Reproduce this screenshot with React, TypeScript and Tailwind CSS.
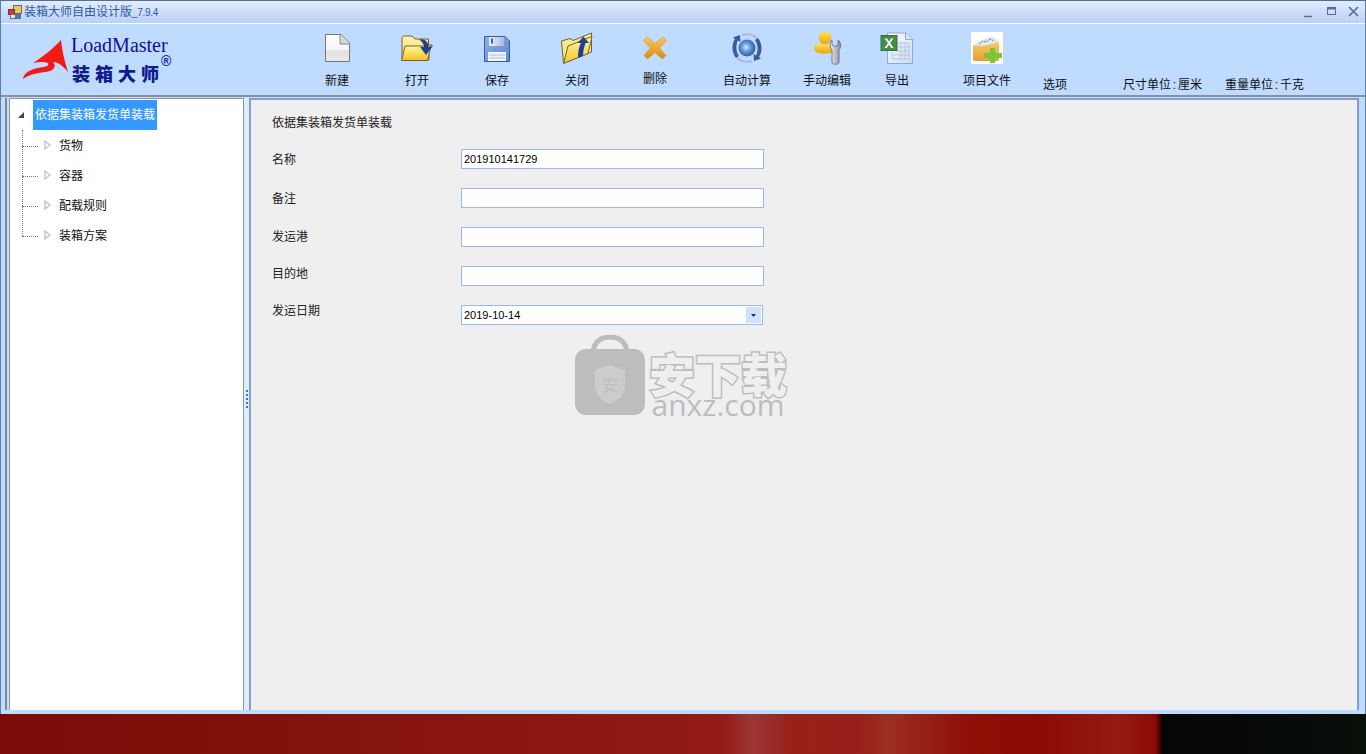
import React from "react";

const cjk = "font-['Liberation_Sans','Noto_Sans_CJK_SC',sans-serif]";

function NewIcon() {
  return (
    <svg width="32" height="32" viewBox="0 0 32 32">
      <defs>
        <linearGradient id="newFill" x1="0" y1="0" x2="0" y2="1">
          <stop offset="0" stopColor="#ffffff" />
          <stop offset="0.55" stopColor="#f6f6f6" />
          <stop offset="0.6" stopColor="#e2e2e2" />
          <stop offset="1" stopColor="#e8e8e8" />
        </linearGradient>
      </defs>
      <path d="M4.5 2.5H20L28.5 11V29.5H4.5Z" fill="url(#newFill)" stroke="#77777a" strokeWidth="1" />
      <path d="M19 3V12H28" fill="#d8d8d8" stroke="#8a8a8a" strokeWidth="1" />
    </svg>
  );
}

function OpenIcon() {
  return (
    <svg width="34" height="32" viewBox="0 0 34 32">
      <defs>
        <linearGradient id="openBack" x1="0" y1="0" x2="0" y2="1">
          <stop offset="0" stopColor="#fff4a8" />
          <stop offset="1" stopColor="#f7d860" />
        </linearGradient>
        <linearGradient id="openFront" x1="0" y1="0" x2="0" y2="1">
          <stop offset="0" stopColor="#fff6a6" />
          <stop offset="1" stopColor="#f8c21c" />
        </linearGradient>
      </defs>
      <path d="M2 6.5C2 5 3 4 4.5 4H12L15 7H28.5V13H32V15H29V28H2Z" fill="url(#openBack)" stroke="#6e6038" strokeWidth="1" />
      <path d="M1.5 28.5L5 14H31L27.5 28.5Z" fill="url(#openFront)" stroke="#6e6038" strokeWidth="1" />
      <path d="M19 7.5C25 6.5 28.5 10 28.5 15H32L26 23L20 15H24C24 12 22 9.5 19 7.5Z" fill="#1f3f8f" />
    </svg>
  );
}

function SaveIcon() {
  return (
    <svg width="28" height="32" viewBox="0 0 28 32">
      <defs>
        <linearGradient id="saveFill" x1="0" y1="0" x2="1" y2="1">
          <stop offset="0" stopColor="#8fb2ea" />
          <stop offset="1" stopColor="#5d86d0" />
        </linearGradient>
        <linearGradient id="saveTop" x1="0" y1="0" x2="1" y2="0">
          <stop offset="0" stopColor="#f0f4fb" />
          <stop offset="1" stopColor="#a9b9d8" />
        </linearGradient>
      </defs>
      <path d="M1.5 4.5H22L26.5 9V29.5H1.5Z" fill="url(#saveFill)" stroke="#2f5cad" strokeWidth="1" />
      <rect x="6" y="5" width="15" height="9" fill="url(#saveTop)" />
      <rect x="8" y="6.5" width="2" height="5" fill="#3a64ae" />
      <rect x="5" y="20" width="18" height="9" fill="#f2f5fb" />
      <path d="M6 23H22M6 26H22" stroke="#a8bde0" strokeWidth="1" />
    </svg>
  );
}

function CloseFolderIcon() {
  return (
    <svg width="34" height="32" viewBox="0 0 34 32">
      <defs>
        <linearGradient id="closeFront" x1="0" y1="0" x2="0" y2="1">
          <stop offset="0" stopColor="#fff6a6" />
          <stop offset="1" stopColor="#f6c72a" />
        </linearGradient>
      </defs>
      <path d="M1.5 9L10 6.5L13 8.5L31.5 1V20L3.5 31Z" fill="#fbe98c" stroke="#6e6038" strokeWidth="1" />
      <path d="M3.5 31.5L8 14L32 4.5L28 21.5Z" fill="url(#closeFront)" stroke="#6e6038" strokeWidth="1" />
      <path d="M18 26C18 19 19 14 21 11H17.5L23.5 4.5L29 11H25.5C24 15 23 20 23 24Z" fill="#1f3f96" />
    </svg>
  );
}

function DeleteIcon() {
  return (
    <svg width="26" height="26" viewBox="0 0 26 26">
      <defs>
        <linearGradient id="delA" x1="0" y1="0" x2="0" y2="1">
          <stop offset="0" stopColor="#fbc65a" />
          <stop offset="1" stopColor="#e08a06" />
        </linearGradient>
      </defs>
      <path
        d="M5 2L13 8.5L21 2L24.5 5.5L17.5 13L24 20.5L20.5 24L13 17.5L5.5 24L2 20.5L8.5 13L1.5 5.5Z"
        fill="url(#delA)"
        stroke="#c98a2a"
        strokeWidth="0.5"
      />
    </svg>
  );
}

function AutoIcon() {
  return (
    <svg width="34" height="32" viewBox="0 0 34 32">
      <defs>
        <radialGradient id="autoGlobe" cx="0.45" cy="0.45" r="0.6">
          <stop offset="0" stopColor="#d2e6fa" />
          <stop offset="0.5" stopColor="#5a90d4" />
          <stop offset="1" stopColor="#2c5098" />
        </radialGradient>
      </defs>
      <circle cx="17" cy="16" r="8.5" fill="url(#autoGlobe)" />
      <path d="M6 26C2 21 1 13 5 7L3 5.5L10 3L10.5 10L8 8.5C5.5 13 6 20 9 24Z" fill="#3c5a9c" />
      <path d="M28 6C32 11 33 19 29 25L31 26.5L24 29L23.5 22L26 23.5C28.5 19 28 12 25 8Z" fill="#3c5a9c" />
      <path d="M12 3C18 1 24 3 27 6" stroke="#a9bade" strokeWidth="2" fill="none" />
      <path d="M22 29C16 31 10 29 7 26" stroke="#a9bade" strokeWidth="2" fill="none" />
    </svg>
  );
}

function ManualIcon() {
  return (
    <svg width="30" height="34" viewBox="0 0 30 34">
      <defs>
        <linearGradient id="manGold" x1="0" y1="0" x2="0" y2="1">
          <stop offset="0" stopColor="#ffe35a" />
          <stop offset="1" stopColor="#e8a40c" />
        </linearGradient>
        <linearGradient id="manTool" x1="0" y1="0" x2="1" y2="0">
          <stop offset="0" stopColor="#f2f2f6" />
          <stop offset="1" stopColor="#8888a0" />
        </linearGradient>
      </defs>
      <circle cx="13" cy="7" r="6.5" fill="url(#manGold)" />
      <path d="M2 17C2 13 6 12 9 13C13 14 18 14 21 15V21C18 23 8 23 4 21C3 20 2 19 2 17Z" fill="url(#manGold)" />
      <path
        d="M20 9V14L23 15.5L26 14V9C29 11 29.5 16 27 19V31C27 34 20 34 20 31V19C17.5 16 17.5 11 20 9Z"
        fill="url(#manTool)"
        stroke="#606078"
        strokeWidth="0.8"
      />
    </svg>
  );
}

function ExcelIcon() {
  return (
    <svg width="34" height="32" viewBox="0 0 34 32">
      <defs>
        <linearGradient id="xlsPage" x1="0" y1="0" x2="1" y2="1">
          <stop offset="0" stopColor="#ffffff" />
          <stop offset="1" stopColor="#c9daf0" />
        </linearGradient>
      </defs>
      <path d="M7.5 1H26L32.5 7V31.5H7.5Z" fill="url(#xlsPage)" stroke="#8fa8cc" strokeWidth="1" />
      <path d="M25.5 1V7.5H32.5" fill="#dfe8f5" stroke="#8fa8cc" strokeWidth="1" />
      <path
        d="M17 11H29V27H12V20M21 11V27M25 11V27M12 23H29M17 15H29M17 19H29"
        fill="none"
        stroke="#b7c8de"
        strokeWidth="1"
      />
      <rect x="1" y="3.5" width="16" height="15" fill="#3f8f45" stroke="#3d6b52" strokeWidth="1" />
      <path d="M4.5 6.5L8 11L4.5 16H6.8L9 12.7L11.2 16H13.6L10.1 11L13.4 6.5H11.1L9 9.4L7 6.5Z" fill="#ffffff" />
    </svg>
  );
}

function ProjectIcon() {
  return (
    <svg width="32" height="32" viewBox="0 0 32 32">
      <defs>
        <linearGradient id="prjFolder" x1="0" y1="0" x2="0" y2="1">
          <stop offset="0" stopColor="#f8cb6a" />
          <stop offset="1" stopColor="#e49f2c" />
        </linearGradient>
      </defs>
      <rect width="32" height="32" fill="#ffffff" />
      <path d="M4 11L20 4L28 9V18H4Z" fill="#e4e8ee" />
      <path d="M8 12L12 9L15 10L19 7L23 9" stroke="#4f7fb4" strokeWidth="1" fill="none" strokeDasharray="2 1" />
      <path d="M2 13L12 14L28 10V27C28 28 27 29 26 29H4C3 29 2 28 2 27Z" fill="url(#prjFolder)" />
      <path d="M19 16H24V21H31V26H24V31H19V26H13V21H19Z" fill="#7ac63a" />
    </svg>
  );
}

function AppIcon() {
  return (
    <svg width="14" height="14" viewBox="0 0 14 14">
      <rect x="5.5" y="0.5" width="8" height="8" fill="#f3c84a" stroke="#5f6f8c" />
      <rect x="0.5" y="4.5" width="6" height="5" fill="#d8342c" stroke="#6f3a3a" />
      <rect x="2.5" y="9.5" width="5" height="4" fill="#e8e8e8" stroke="#5f6f8c" />
      <rect x="8.5" y="9.5" width="4" height="4" fill="#4a78c4" stroke="#5f6f8c" />
    </svg>
  );
}

function Logo() {
  return (
    <div className="relative h-[71px] w-[296px] shrink-0">
      <svg className="absolute left-[21px] top-[14px]" width="50" height="44" viewBox="0 0 50 44">
        <path
          d="M1 41C2 33 12 30 22 29C28 28 28 24 21 24C18 24 14 24 11 25C20 19 31 11 39 2C40 12 42 22 46 34C41 28 36 24 31 24C34 27 33 31 28 33C20 35 9 35 1 41Z"
          fill="#f21a14"
        />
      </svg>
      <div className="absolute left-[70px] top-[9px] font-['Liberation_Serif',serif] text-[20px] leading-[24px] text-[#10109a]">
        LoadMaster
      </div>
      <div className="absolute left-[71px] top-[38px] font-['Noto_Sans_CJK_SC',sans-serif] text-[18px] font-black leading-[22px] tracking-[5px] text-[#0f1a8c]">
        装箱大师
      </div>
      <div className="absolute left-[160px] top-[30px] font-['Liberation_Sans',sans-serif] text-[14px] font-bold leading-[14px] text-[#1a2a9c]">
        ®
      </div>
    </div>
  );
}

const tools = [
  { label: "新建", icon: <NewIcon />, width: "w-[80px]", gap: "mt-[9px]" },
  { label: "打开", icon: <OpenIcon />, width: "w-[80px]", gap: "mt-[9px]" },
  { label: "保存", icon: <SaveIcon />, width: "w-[80px]", gap: "mt-[9px]" },
  { label: "关闭", icon: <CloseFolderIcon />, width: "w-[80px]", gap: "mt-[9px]" },
  { label: "删除", icon: <DeleteIcon />, width: "w-[76px]", gap: "mt-[7px]" },
  { label: "自动计算", icon: <AutoIcon />, width: "w-[108px]", gap: "mt-[9px]" },
  { label: "手动编辑", icon: <ManualIcon />, width: "w-[52px]", gap: "mt-[9px]" },
  { label: "导出", icon: <ExcelIcon />, width: "w-[88px]", gap: "mt-[9px]" },
  { label: "项目文件", icon: <ProjectIcon />, width: "w-[92px]", gap: "mt-[9px]" },
];

function Toolbar() {
  return (
    <div className="flex h-[71px] shrink-0 bg-[#bfdbff]">
      <Logo />
      {tools.map((t) => (
        <div key={t.label} className={`flex shrink-0 flex-col items-center pt-[8px] ${t.width}`}>
          <div className="flex h-[32px] items-center justify-center overflow-visible whitespace-nowrap">{t.icon}</div>
          <span className={`whitespace-nowrap text-[12px] leading-[16px] text-[#111] ${t.gap}`}>{t.label}</span>
        </div>
      ))}
      <div className="ml-[10px] flex items-start pt-[53px] text-[12px] leading-[16px] text-[#111] [word-spacing:-1.5px]">
        <span className="w-[80px]">选项</span>
        <span className="w-[102px]">尺寸单位 : 厘米</span>
        <span>重量单位 : 千克</span>
      </div>
    </div>
  );
}

const treeItems = ["货物", "容器", "配载规则", "装箱方案"];

function TreePanel() {
  return (
    <div className="flex w-[239px] shrink-0 border-l-2 border-[#7d8794] bg-[#c5dcfa] pl-[2px]">
      <div className="flex-1 border-x border-t border-[#8d95a0] bg-white">
        <div className="flex h-[31px] items-end pl-[8px]">
          <svg className="mb-[12px]" width="6" height="6" viewBox="0 0 6 6">
            <path d="M6 0V6H0Z" fill="#444" />
          </svg>
          <div className="ml-[9px] flex h-[30px] w-[124px] items-center justify-center bg-[#3399ff] text-[12px] text-white">
            依据集装箱发货单装载
          </div>
        </div>
        <div className="relative">
          {treeItems.map((item) => (
            <div key={item} className="flex h-[30px] items-center pl-[12px]">
              <div className="w-[16px] translate-y-px border-t border-dotted border-[#777]" />
              <svg className="ml-[6px]" width="7" height="10" viewBox="0 0 7 10">
                <path d="M1 1L6 5L1 9Z" fill="#fff" stroke="#c4c4c4" strokeWidth="1.4" />
              </svg>
              <span className="ml-[8px] translate-y-px text-[12px] text-[#111]">{item}</span>
            </div>
          ))}
          <div className="absolute left-[12px] top-0 h-[106px] border-l border-dotted border-[#777]" />
        </div>
      </div>
    </div>
  );
}

const fields = [
  { label: "名称", value: "201910141729", offset: "translate-y-px" },
  { label: "备注", value: "", offset: "translate-y-px" },
  { label: "发运港", value: "", offset: "" },
  { label: "目的地", value: "", offset: "-translate-y-[2px]" },
];

function FormPanel() {
  return (
    <div className="relative flex-1 border-2 border-b-0 border-[#7f9fcd] bg-[#efefef] pl-[21px] pt-[14px]">
      <div className="h-[18px] text-[12px] leading-[18px] text-[#222]">依据集装箱发货单装载</div>
      <div className="mt-[17px] flex flex-col gap-[19px]">
        {fields.map((f) => (
          <div key={f.label} className="flex h-[20px] items-center">
            <span className={`w-[189px] text-[12px] text-[#222] ${f.offset}`}>{f.label}</span>
            <input
              readOnly
              value={f.value}
              className="h-[20px] w-[303px] border border-[#98b9ea] bg-white px-[2px] font-['Liberation_Sans',sans-serif] text-[11px] text-black outline-none"
            />
          </div>
        ))}
        <div className="flex h-[20px] items-center">
          <span className="w-[189px] -translate-y-[4px] text-[12px] text-[#222]">发运日期</span>
          <div className="flex h-[20px] w-[302px] items-center justify-between border border-[#98b9ea] bg-white pl-[2px] pr-[1px] font-['Liberation_Sans',sans-serif] text-[11px] text-black">
            <span>2019-10-14</span>
            <div className="flex h-[16px] w-[15px] items-center justify-center bg-[#cfe2fa]">
              <svg width="5" height="3" viewBox="0 0 5 3">
                <path d="M0 0H5L2.5 3Z" fill="#15315f" />
              </svg>
            </div>
          </div>
        </div>
      </div>
      <Watermark />
    </div>
  );
}

function Watermark() {
  return (
    <div className="absolute left-[323px] top-[235px] flex items-start">
      <svg width="72" height="81" viewBox="0 0 72 81">
        <path d="M19 16C21 6 27 2 36 2C45 2 51 6 53 16" fill="none" stroke="#bdbdbd" strokeWidth="5" />
        <rect x="1" y="14" width="70" height="66" rx="11" fill="#bdbdbd" />
        <path d="M36 30L51 35V52C51 60 44 66 36 69C28 66 21 60 21 52V35Z" fill="#cccccc" />
        <text x="36" y="56" textAnchor="middle" fontSize="16" fontFamily="Noto Sans CJK SC" fill="#bdbdbd">
          安
        </text>
      </svg>
      <div className="ml-[3px] flex flex-col items-center">
        <span className="mt-[14px] font-['Noto_Sans_CJK_SC',sans-serif] text-[46px] font-black leading-[46px] text-[#efefef] [-webkit-text-stroke:3px_#bdbdbd] [paint-order:stroke_fill]">
          安下载
        </span>
        <span className="font-['Open_Sans',sans-serif] text-[30px] leading-[20px] text-[#bdbdbd]">
          anxz.com
        </span>
      </div>
    </div>
  );
}

function Splitter() {
  return (
    <div className="flex w-[5px] shrink-0 flex-col items-center justify-center gap-[2px] bg-[#e2ebf8] pb-[10px]">
      {[0, 1, 2, 3, 4].map((i) => (
        <div key={i} className="h-[2px] w-[2px] bg-[#2f78d8]" />
      ))}
    </div>
  );
}

export default function App() {
  return (
    <div className={`flex h-[754px] w-[1366px] flex-col overflow-hidden ${cjk}`}>
      <div className="flex h-[714px] shrink-0 flex-col border-x border-[#5f7fa8] bg-[#bfdbff]">
        <div className="flex h-[23px] shrink-0 items-center border-t border-[#4f6f9c] bg-gradient-to-b from-[#e2ecfc] to-[#b9d0f6] pl-[7px]">
          <AppIcon />
          <span className="ml-[2px] text-[12px] text-[#2a5a9f]">
            装箱大师自由设计版<span className="text-[10px] tracking-[-0.3px]">_7.9.4</span>
          </span>
          <div className="ml-auto flex items-center pr-[5px]">
            <svg width="60" height="14" viewBox="0 0 60 14">
              <path d="M4 11.5H12" stroke="#5a7090" strokeWidth="1.5" />
              <rect x="27.5" y="2.5" width="8" height="7" fill="none" stroke="#5a7090" strokeWidth="1" />
              <path d="M27.5 3.5H35.5" stroke="#5a7090" strokeWidth="2" />
              <path d="M49 2L58 11M58 2L49 11" stroke="#5a7090" strokeWidth="1.7" />
            </svg>
          </div>
        </div>
        <div className="h-px shrink-0 bg-white" />
        <Toolbar />
        <div className="h-[2px] shrink-0 bg-[#8c8f96]" />
        <div className="flex min-h-0 flex-1 pl-[4px] pr-[6px] pt-px">
          <TreePanel />
          <Splitter />
          <FormPanel />
        </div>
        <div className="h-[4px] shrink-0 bg-[#bfdbff]" />
      </div>
      <div className="flex-1 bg-[linear-gradient(90deg,#7d0c08_0%,#82110c_20%,#8b1710_40%,#8f1a14_50%,#951c16_53%,#9c3636_55%,#982019_58%,#96211a_63%,#9c2e24_65%,#8f0f07_71%,#8c0b04_76%,#951a15_82%,#8b0a04_84.6%,#050505_85.1%,#070a0a_94%,#071009_100%)]" />
    </div>
  );
}
